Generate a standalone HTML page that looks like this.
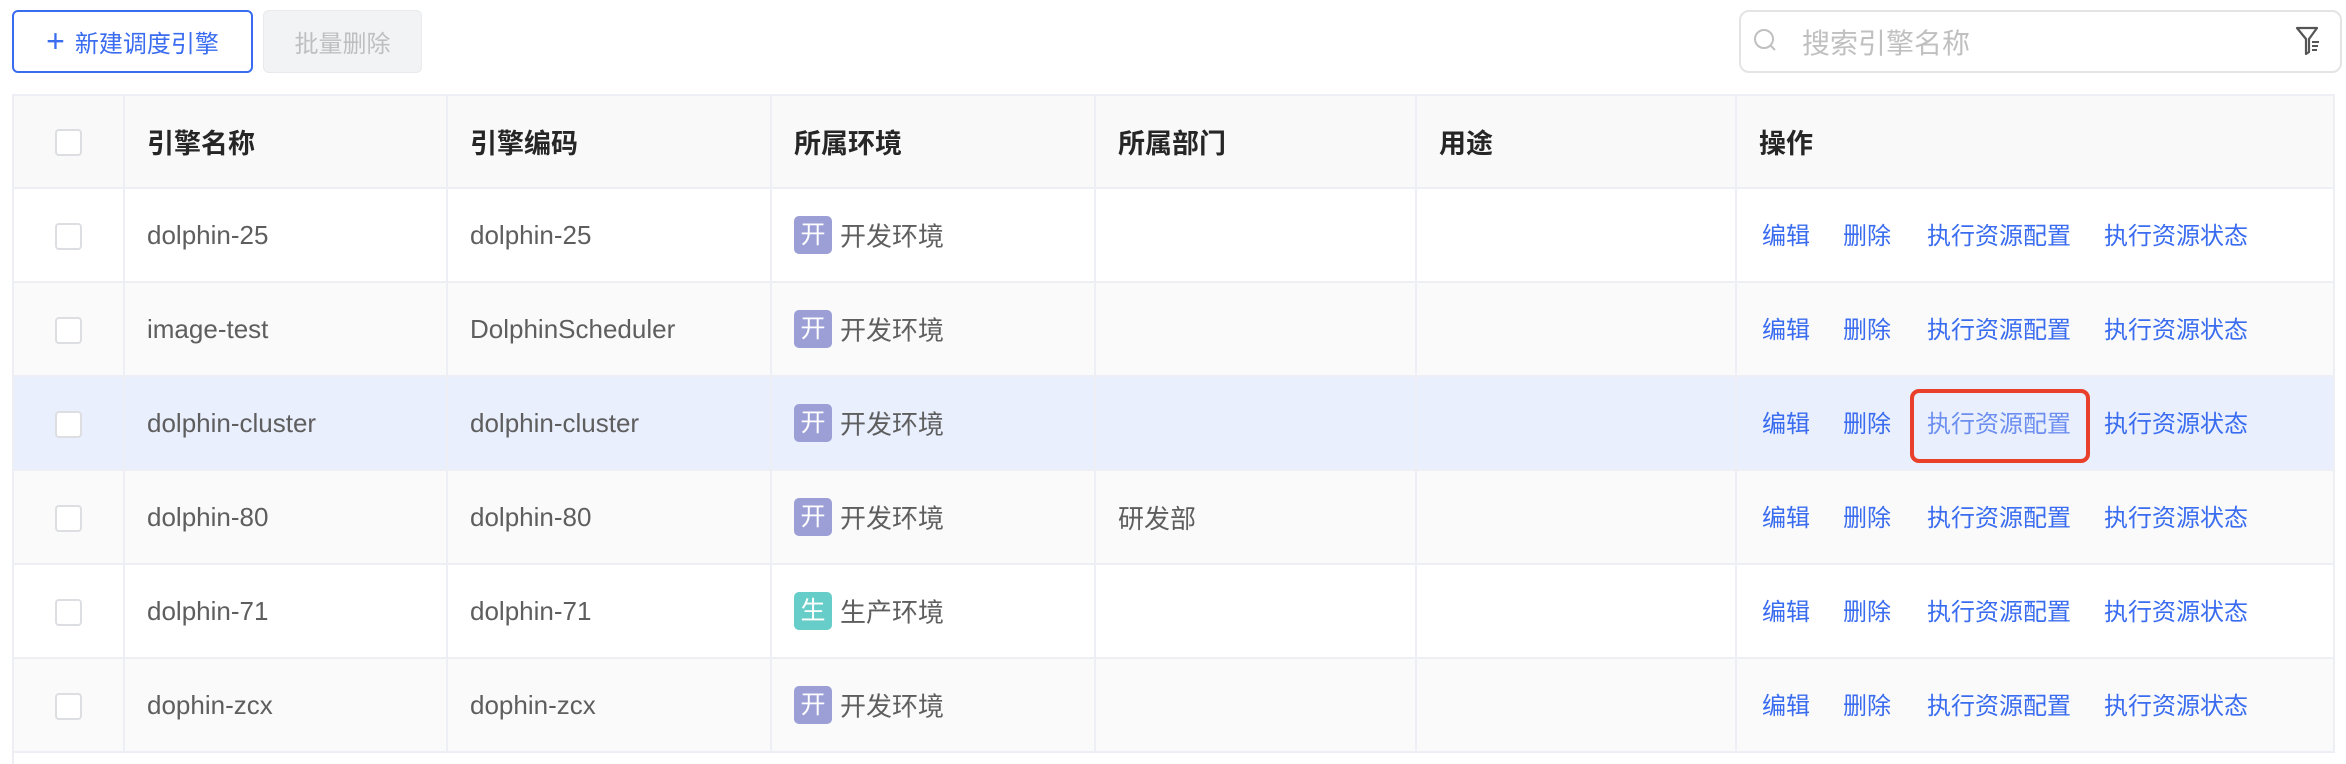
<!DOCTYPE html>
<html><head><meta charset="utf-8"><style>
*{box-sizing:border-box;margin:0;padding:0}
body{width:2346px;height:764px;background:#fff;font-family:"Liberation Sans","Noto Sans CJK SC",sans-serif;position:relative;overflow:hidden}
.btn{position:absolute;top:10px;height:63px;border-radius:6px;font-size:24px;display:flex;align-items:center;justify-content:center}
.b1{left:12px;width:241px;border:2px solid #3a6cf0;color:#3a6cf0}
.b2{left:263px;width:159px;background:#f2f3f5;border:1px solid #e8e9ec;color:#bfbfbf}
.search{position:absolute;left:1739px;top:10px;width:603px;height:63px;border:2px solid #e3e4e6;border-radius:10px}
.search span{position:absolute;left:61px;top:10px;font-size:28px;color:#c0c0c0}
table{position:absolute;left:12px;top:94px;border-collapse:collapse;width:2323px;table-layout:fixed}
td,th{border:2px solid #edeff5;height:94px;font-size:26px;color:#5e5e5e;font-weight:normal;text-align:left;padding-left:22px;white-space:nowrap}
th{background:#f9f9f9;color:#262626;font-size:27px;font-weight:600;height:93px}
td.c,th.c{padding-left:0;text-align:center}
.cb{display:inline-block;width:27px;height:27px;border:2px solid #dcdee2;border-radius:4px;background:#fff;vertical-align:middle}
tr.g td{background:#fafafa}
tr.h td{background:#e9effd}
.tag{display:inline-block;width:38px;height:38px;border-radius:5px;background:#9b9fd6;color:#fff;text-align:center;line-height:38px;font-size:25px;margin-right:8px;vertical-align:middle}
.tag.s{background:#66cdc8}
.env{vertical-align:middle}
.a{color:#3a6cf0;font-size:24px;position:absolute}
td.op{position:relative}
</style></head><body>
<div class="btn b1"><span style="font-size:32px;margin-right:10px;font-weight:300">+</span>新建调度引擎</div>
<div class="btn b2">批量删除</div>
<div class="search">
<svg style="position:absolute;left:11px;top:15px" width="26" height="28" viewBox="0 0 26 28"><circle cx="12" cy="12" r="9" fill="none" stroke="#c0c0c0" stroke-width="2"/><line x1="19" y1="19" x2="23" y2="23" stroke="#c0c0c0" stroke-width="2"/></svg>
<span>搜索引擎名称</span>
<svg style="position:absolute;left:553px;top:12px" width="28" height="34" viewBox="0 0 28 34"><path d="M3 4 H23 L15 15 V28 L12 30 V15 Z" fill="none" stroke="#555" stroke-width="2.2" stroke-linejoin="round"/><line x1="18" y1="18" x2="25" y2="18" stroke="#555" stroke-width="2"/><line x1="18" y1="22" x2="24" y2="22" stroke="#555" stroke-width="2"/><line x1="18" y1="26" x2="23" y2="26" stroke="#555" stroke-width="2"/></svg>
</div>
<table>
<colgroup><col style="width:111px"><col style="width:323px"><col style="width:324px"><col style="width:324px"><col style="width:321px"><col style="width:320px"><col></colgroup>
<tr><th class="c"><span class="cb"></span></th><th>引擎名称</th><th>引擎编码</th><th>所属环境</th><th>所属部门</th><th>用途</th><th>操作</th></tr>
<tr><td class="c"><span class="cb"></span></td><td>dolphin-25</td><td>dolphin-25</td><td><span class="tag">开</span><span class="env">开发环境</span></td><td></td><td></td><td class="op"><span class="a" style="left:25px;top:27px">编辑</span><span class="a" style="left:106px;top:27px">删除</span><span class="a" style="left:190px;top:27px">执行资源配置</span><span class="a" style="left:367px;top:27px">执行资源状态</span></td></tr>
<tr class="g"><td class="c"><span class="cb"></span></td><td>image-test</td><td>DolphinScheduler</td><td><span class="tag">开</span><span class="env">开发环境</span></td><td></td><td></td><td class="op"><span class="a" style="left:25px;top:27px">编辑</span><span class="a" style="left:106px;top:27px">删除</span><span class="a" style="left:190px;top:27px">执行资源配置</span><span class="a" style="left:367px;top:27px">执行资源状态</span></td></tr>
<tr class="h"><td class="c"><span class="cb"></span></td><td>dolphin-cluster</td><td>dolphin-cluster</td><td><span class="tag">开</span><span class="env">开发环境</span></td><td></td><td></td><td class="op"><span class="a" style="left:25px;top:27px">编辑</span><span class="a" style="left:106px;top:27px">删除</span><span class="a" style="left:190px;top:27px;color:#6d8ff0">执行资源配置</span><span class="a" style="left:367px;top:27px">执行资源状态</span><div style="position:absolute;left:173px;top:12px;width:180px;height:74px;border:4px solid #e8402a;border-radius:9px"></div></td></tr>
<tr class="g"><td class="c"><span class="cb"></span></td><td>dolphin-80</td><td>dolphin-80</td><td><span class="tag">开</span><span class="env">开发环境</span></td><td>研发部</td><td></td><td class="op"><span class="a" style="left:25px;top:27px">编辑</span><span class="a" style="left:106px;top:27px">删除</span><span class="a" style="left:190px;top:27px">执行资源配置</span><span class="a" style="left:367px;top:27px">执行资源状态</span></td></tr>
<tr><td class="c"><span class="cb"></span></td><td>dolphin-71</td><td>dolphin-71</td><td><span class="tag s">生</span><span class="env">生产环境</span></td><td></td><td></td><td class="op"><span class="a" style="left:25px;top:27px">编辑</span><span class="a" style="left:106px;top:27px">删除</span><span class="a" style="left:190px;top:27px">执行资源配置</span><span class="a" style="left:367px;top:27px">执行资源状态</span></td></tr>
<tr class="g"><td class="c"><span class="cb"></span></td><td>dophin-zcx</td><td>dophin-zcx</td><td><span class="tag">开</span><span class="env">开发环境</span></td><td></td><td></td><td class="op"><span class="a" style="left:25px;top:27px">编辑</span><span class="a" style="left:106px;top:27px">删除</span><span class="a" style="left:190px;top:27px">执行资源配置</span><span class="a" style="left:367px;top:27px">执行资源状态</span></td></tr>
</table>
<div style="position:absolute;left:12px;top:751px;width:2px;height:13px;background:#edeff5"></div>
</body></html>
